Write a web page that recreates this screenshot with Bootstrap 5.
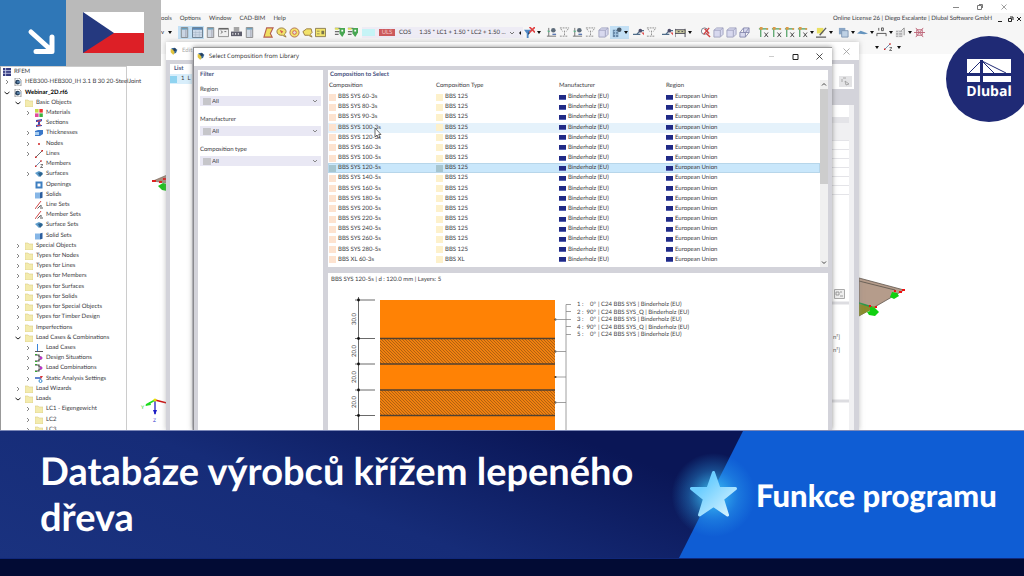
<!DOCTYPE html>
<html lang="cs">
<head>
<meta charset="utf-8">
<meta name="viewport" content="width=device-width, initial-scale=1">
<title>Databáze výrobců křížem lepeného dřeva</title>
<link href="https://cdn.jsdelivr.net/npm/bootstrap@5.3.0/dist/css/bootstrap.min.css" rel="stylesheet">
<style>
:root{--frame:#d3d3da;--ink:#3a3a3e;--navy:#1f2a75}
body{font-family:"Lato","Noto Sans",sans-serif;font-size:6px;line-height:10px;color:var(--ink);background:#fff;text-rendering:geometricPrecision}
button,select{font:inherit;color:inherit;border:0;background:none;padding:0}
svg{display:block;flex:none}
.stage{flex:1 1 0;min-height:0}
.ic{width:11px;height:11px;opacity:.85}
.ic-s{width:8px;height:8px}
/* application frame */
.app-title{height:13px;padding-right:17px;gap:18px}
.app-menu{height:12px;background:#f6f6f6;padding:0 2px 0 161px}
.app-menu nav{gap:8px}
.app-menu a{color:#444}
.app-tools{height:15px;background:#f6f6f6;padding-left:161px}
.app-tools2{height:14px;background:#f8f8f8;padding-right:122px;gap:4px}
.tool{width:13px;height:13px;display:grid;place-items:center;flex:none}
.tool.on{background:#c3e0f5}
.drop{width:6px;height:13px;display:grid;place-items:center;flex:none}
.drop::before{content:"";border:2px solid transparent;border-top:3px solid #111;border-bottom:0}
.drop.on{background:#c3e0f5}
.first-drop{width:17px;gap:3px;flex:none}
.split{width:6px;flex:none}
.split-s{width:3px;flex:none}
.loadcase{width:161px;height:11px;background:#eeecf5;gap:4px;flex:none}
.lc-color{width:13px;height:7px;background:#c6f4f6;flex:none}
.lc-tag{width:16px;height:7px;line-height:7px;background:#cc5a5c;color:#f3c7c7;flex:none}
/* navigator */
.navigator{width:127px;margin:12px 0 -5px;border-left:1px solid #999;border-top:1px solid #ccc;border-right:1px solid #ccc}
.navigator li{flex:1 1 0;min-height:0;gap:3px;white-space:nowrap}
.lv0{padding-left:2px}.lv1{padding-left:2px}.lv2{padding-left:13px}.lv3{padding-left:23px}
.chev{width:8px;height:8px;fill:none;stroke:#888}
.chev.open{stroke:#222}
/* windows */
.win{position:absolute;bottom:0;background:var(--frame)}
.win-edit{left:166px;right:165px;top:42px;box-shadow:0 0 5px #8888}
.win-lib{left:193px;right:192px;top:47px;box-shadow:0 0 5px #555a;border-left:1px solid #8a8a8e;border-top:1px solid #999}
.win-bar{height:18px;background:#fff;gap:4px;flex:none}
.win-edit .win-bar{color:#aaa;padding:0 9px 0 4px}
.win-lib .win-bar{color:#222;font:6px/10px "Open Sans",sans-serif;padding:0 9px 2px 3px}
.cap-btns{gap:17px}
.pane{background:#fff}
.pane-title{color:#47527e;font-weight:700}
.list-pane{width:22px}
.list-pane .picked{background:#d8eefb;height:10px;gap:4px}
.sw{width:7px;height:7px;flex:none}
.sw.sky{background:#8fd3f0}
.edit-side{width:22px;margin:4px 5px 0 0}
.edit-tools{height:25px;padding:2px}
.edit-grid{border-right:5px solid #f0f0f2;padding-top:4px;min-height:0}
.edit-grid div{border-bottom:1px solid #e4e4e8;height:9px}
.edit-grid .bar{background:#e4e4e8;height:5px}
.edit-grid .head{background:#f0f0f2;height:18px}
.lib-body{padding:4px 4px 0;gap:5px;min-height:0}
.filter{width:125px;padding:0 2px;flex:none}
.filter .group{margin-top:5px;margin-bottom:9px}
.filter label{display:block;margin-bottom:1px}
.pick{height:10px;background:#e9e8f4;padding:0 3px 0 3px;gap:1px}
.pick select{appearance:none;height:10px;line-height:10px;min-width:0}
.pick .sw{background:#c6c6ca;width:8px}
.comp-pane{height:197px;flex:none}
.comp-pane .pane-title{padding-left:2px}
.comp-table{table-layout:fixed;width:100%;height:185px}
.comp-table th,.comp-table td{padding:0 0 0 1px;height:10px;line-height:8px;font-weight:400;white-space:nowrap;vertical-align:middle}
.comp-table th{height:12px}
.comp-table .c1{width:107px}.comp-table .c2{width:123px}.comp-table .c3{width:107px}
.comp-table tr.hover{background:#e5f2fb}
.comp-table tr.active{background:#c9e7fb;box-shadow:inset 0 0 0 1px #b7d6ea}
.cell{gap:2px;height:8px}
.peach{background:#fde3d0}.cream{background:#fdf1cb}
.active .peach,.active .cream{background:#a6c5cf}
.eu{width:7px;height:5px;background:#202a86;flex:none;border-bottom:1px solid #5560b0}
.scroller{width:8px;background:#f0f0f0}
.scroller i{display:block;height:95px;background:#cdcdcd}
.preview{margin-top:6px;padding:2px 3px 0;min-height:0}
.section-draw{width:375px;height:150px;margin-left:-3px;font-size:6px;fill:#444}
.pointer{position:absolute;left:180px;top:79px;width:8px;height:12px}
/* canvas objects and overlays */
.model-r{position:absolute;right:117px;top:276px;width:48px;height:44px}
.model-l{position:absolute;left:151px;top:172px;width:16px;height:20px}
.axes{position:absolute;left:140px;top:395px;width:27px;height:30px;font-size:5px}
.corner{position:absolute;left:0;top:0;height:66px}
.corner-go{width:66px;background:#2f77b7}
.corner-flag{width:95px;background:#bababa}
.brand{position:absolute;right:-8px;top:36px;width:86px;height:86px;border-radius:50%;background:var(--navy);color:#fff;font:700 14px/16px "Open Sans",sans-serif;padding-top:23px}
.brand div{margin-top:2px}
/* banner */
.banner{height:128px;background:linear-gradient(20deg,#1a327f 0%,#162c78 35%,#0a1656 66%);border-top:1px solid #7c88b8;color:#fff}
.banner h1{font:700 38px/46px "Lato",sans-serif;margin:0;padding:0 30px 2px 40px}
.kind{width:345px;flex:none;gap:18px;padding:0 0 0 10px;position:relative}
.kind::before{content:"";position:absolute;inset:0;background:#0f5dd4;clip-path:polygon(64px 0,100% 0,100% 100%,0 100%)}
.kind>*{position:relative}
.kind svg{width:49px;height:49px;overflow:visible}
.kind span{font:900 31px/36px "Lato",sans-serif;white-space:nowrap}
.foot{height:18px;background:#020b34;border-top:1px solid #10287a}
</style>
</head>
<body class="vh-100 d-flex flex-column overflow-hidden">

<svg width="0" height="0" class="position-absolute" aria-hidden="true">
<symbol id="folder" viewBox="0 0 8 8"><path d="M0 1h3l1 1h4v6H0z" fill="#f3ebae" stroke="#dccf86" stroke-width=".6"/></symbol>
<symbol id="app" viewBox="0 0 8 8"><path d="M0 0h8v8H0z" fill="#343b80"/><path d="M0 2.6h8M0 5.3h8M2.6 0v8" stroke="#cfd3ee" stroke-width=".8"/></symbol>
<symbol id="file" viewBox="0 0 8 8"><path d="M1 0h4l2 2v6H1z" fill="#fff" stroke="#777" stroke-width=".7"/><circle cx="3.6" cy="4.2" r="2.4" fill="#2c4663"/><path d="M3 4h4" stroke="#7fb2df"/></symbol>
<symbol id="materials" viewBox="0 0 8 8"><rect width="3.6" height="3.6" fill="#c5d94b"/><rect x="4.4" width="3.4" height="3.6" fill="#e33"/><rect y="4.4" width="3.6" height="3.6" fill="#e04a9c"/><rect x="4.4" y="4.4" width="3.4" height="3.6" fill="#3db33d"/></symbol>
<symbol id="sections" viewBox="0 0 8 8"><path d="M1 1l6-1v2L5 3v3l2 0v1L1 8V6l2-.5V3L1 3z" fill="#3b4fb5"/><path d="M2 2.500l4-1M2 6.800l4-1" stroke="#e44"/></symbol>
<symbol id="thick" viewBox="0 0 8 8"><path d="M0 2l3-1h5v4L5 7H0z" fill="#3a78c9"/><path d="M0 3h4v3H0z" fill="#a8cdf0"/></symbol>
<symbol id="node" viewBox="0 0 8 8"><circle cx="4" cy="4" r="1" fill="#c22"/></symbol>
<symbol id="line" viewBox="0 0 8 8"><path d="M.8 7.200l6.400-6.400" stroke="#444" stroke-width=".8"/><path d="M0 6.400h1.600V8H0zM6.400 0H8v1.600H6.400z" fill="#c22"/></symbol>
<symbol id="member" viewBox="0 0 8 8"><path d="M.8 6.200L6 1" stroke="#68a" stroke-width=".9"/><path d="M0 5.600h1.400V7H0zM5.300.3h1.400v1.400H5.300z" fill="#c22"/><path d="M5.500 4.500H8L5.500 7.500H8" stroke="#444" fill="none" stroke-width=".7"/></symbol>
<symbol id="set" viewBox="0 0 8 8"><path d="M0 8l6-8" stroke="#c33" stroke-width=".9"/><path d="M2.500 7.500l3-3M6 4v2M5 7h3" fill="none" stroke="#444" stroke-width=".9"/></symbol>
<symbol id="surface" viewBox="0 0 8 8"><path d="M0 3l4-2 4 2-4 4z" fill="#5e9ccb"/><path d="M3 3l3-1 2 2-3 3z" fill="#2d648f"/></symbol>
<symbol id="opening" viewBox="0 0 8 8"><path d="M.5.500h7v7h-7z" fill="#3f7fc0"/><path d="M2.500 2.500h3v3h-3z" fill="#fff"/></symbol>
<symbol id="solid" viewBox="0 0 8 8"><path d="M0 1.500h5v6H0z" fill="#86b6e6"/><path d="M5 1.500L7.500.7v6L5 7.500z" fill="#2c5f9f"/></symbol>
<symbol id="load" viewBox="0 0 8 8"><path d="M2.500 0v7" stroke="#3a86d8"/><path d="M0 7.500h8" stroke="#444" stroke-width=".9"/></symbol>
<symbol id="combo" viewBox="0 0 8 8"><path d="M0 1h4v2h2v2H4v2H0" fill="none" stroke="#444" stroke-width="1.200"/><path d="M5 2l3 2-3 2z" fill="#b3c"/><path d="M0 0h2v1H0zM0 7h2v1H0z" fill="#3a3"/></symbol>
<symbol id="analysis" viewBox="0 0 8 8"><path d="M0 3h6" stroke="#2c58c0" stroke-width="1.500"/><path d="M5 1l3 0-2 3z" fill="#d33"/><circle cx="5.500" cy="6" r="1.500" fill="none" stroke="#38c"/></symbol>
<symbol id="panel" viewBox="0 0 12 12"><path d="M2.500.5h7v11h-7z" fill="#ccd4e0" stroke="#777"/><path d="M3 2h6" stroke="#48a" stroke-width="1.500"/><path d="M7.500 3v8" stroke="#99a"/></symbol>
<symbol id="tablei" viewBox="0 0 12 12"><path d="M.5.500h11v11H.5z" fill="#cfd8e6" stroke="#567"/><path d="M1 2h10" stroke="#47a" stroke-width="2"/><path d="M1 6h10M1 8.500h10M4 4v7M8 4v7" stroke="#9ab" stroke-width=".5"/></symbol>
<symbol id="consolei" viewBox="0 0 12 12"><path d="M.5 1.500h11v9H.5z" fill="#eee" stroke="#777"/><path d="M1 2h10" stroke="#444" stroke-width="1.500"/><path d="M3 4l2 1.500-2 1.500M7 5h2" fill="none" stroke="#555"/></symbol>
<symbol id="printer" viewBox="0 0 12 12"><path d="M3 0h6v5H3z" fill="#999"/><path d="M0 5h12v5H0z" fill="#445"/><path d="M2 6.500v2M5 6.500v2M8 6.500v2" stroke="#eee"/></symbol>
<symbol id="poly" viewBox="0 0 12 12"><path d="M4 1h7L8 7l2 4H1z" fill="#f0dc48" stroke="#a43" stroke-width="1.200"/></symbol>
<symbol id="ring" viewBox="0 0 12 12"><path d="M1 5a5 4 0 0 1 10 0 5 4 0 0 1-2 3l2 3-4-2a5 4 0 0 1-6-4z" fill="#f2df52" stroke="#876420"/><path d="M4 3l4 2-2 2z" fill="#c43"/></symbol>
<symbol id="ring2" viewBox="0 0 12 12"><circle cx="6" cy="6" r="5" fill="#f2df52" stroke="#a4553a"/><circle cx="6" cy="6" r="2" fill="#ddd" stroke="#c43"/></symbol>
<symbol id="blob" viewBox="0 0 12 12"><path d="M1 5l4-3h5l1 4-2 2 2 3-4-2H3z" fill="#f2df52" stroke="#876420"/></symbol>
<symbol id="yellow" viewBox="0 0 12 12"><path d="M.5 1.500h11v9H.5z" fill="#f3e356" stroke="#763"/><path d="M2 4h3v1H2zM2 7h3v1H2zM7 4h3v4H7z" fill="#665f30"/></symbol>
<symbol id="green" viewBox="0 0 12 12"><path d="M1 1.500h6M1 5h5M1 8h4" stroke="#555" stroke-width="1.500"/><path d="M6 1h6v5L9 11 6 7z" fill="#2a9a36"/><path d="M8 3h2v2H8z" fill="#fff"/><path d="M1 1h4v2H1z" fill="#d8d83c"/></symbol>
<symbol id="filteri" viewBox="0 0 12 12"><path d="M0 3h8L5 7v5H3V7z" fill="#3275bd"/><path d="M6 0l6 6M12 0L6 6" stroke="#d22" stroke-width="1.800"/></symbol>
<symbol id="support" viewBox="0 0 12 12"><path d="M3 1v9M1 10h10" stroke="#555"/><path d="M3 6l-2-2h4z" fill="#4a7"/><circle cx="8" cy="3.500" r="2.500" fill="#456"/><path d="M7 8h4" stroke="#46a" stroke-width="1.500"/></symbol>
<symbol id="forces" viewBox="0 0 12 12"><path d="M1 1h10M2 2l2 3M10 2L8 5M1 10h9M6 4v6" fill="none" stroke="#777" stroke-dasharray="2 1"/></symbol>
<symbol id="result" viewBox="0 0 12 12"><path d="M2 3h6v8H2z" fill="#56789a"/><path d="M3 5h5M3 8h5M5 3v8" stroke="#a5c8e5"/><circle cx="9" cy="3" r="2.500" fill="#345"/></symbol>
<symbol id="beam" viewBox="0 0 12 12"><path d="M0 8h8M4 8l4-4h4" fill="none" stroke="#357" stroke-width="1.300"/><circle cx="8" cy="4" r="2" fill="#335"/><path d="M9 6h3v3z" fill="#d33"/></symbol>
<symbol id="flag-i" viewBox="0 0 12 12"><path d="M0 3h12v4H0z" fill="#cc9"/><path d="M0 2v9M11 2v9M0 3h11M0 7h11M3 5h2M7 5h2" stroke="#223"/></symbol>
<symbol id="zoomi" viewBox="0 0 12 12"><circle cx="5" cy="4.500" r="3.500" fill="#fff" stroke="#567"/><path d="M7 7l4 4M5 2l5 5M10 1L4 8" stroke="#c22" stroke-width="1.500"/></symbol>
<symbol id="cube" viewBox="0 0 12 12"><path d="M1 3.500L4 1h7v7l-3 3H1z" fill="#d3d5ee" stroke="#9496b8"/><path d="M1 3.500h7v7M8 3.500L11 1" stroke="#9496b8" fill="none"/></symbol>
<symbol id="cubes" viewBox="0 0 12 12"><path d="M5 1h6v5H5zM1 6h6v5H1z" fill="#d3d5ee" stroke="#777aa5"/><path d="M1 6l4-5M7 11l4-5M7 6l4-5" stroke="#777aa5"/></symbol>
<symbol id="axis" viewBox="0 0 12 12"><path d="M1 2h10M3 2v9" stroke="#2f9148" stroke-width="1.300"/><path d="M2 0h3v3H2zM9 1h2v2H9z" fill="#d98b2b"/><path d="M7 6l4 5M11 6l-4 5" stroke="#222"/></symbol>
<symbol id="pencil" viewBox="0 0 12 12"><path d="M1 1h7v6H1z" fill="#e7dd45"/><path d="M0 11h11M4 9l7-8" stroke="#444" stroke-width="1.500"/></symbol>
<symbol id="layers" viewBox="0 0 12 12"><path d="M1 1h7v7H1z" fill="#7798bd"/><path d="M4 4h7v7H4z" fill="#b5cbe3" stroke="#6b87a7"/></symbol>
<symbol id="plate" viewBox="0 0 12 12"><path d="M0 7l4-3 8 3-4 1z" fill="#4c83b5"/></symbol>
<symbol id="dim" viewBox="0 0 12 12"><path d="M1 10V7h10v3M3 1v3M6 1h2v3H6z" stroke="#333" fill="none"/></symbol>
<symbol id="grayres" viewBox="0 0 12 12"><path d="M1 4h7v7H1z" fill="#a5a5a8"/><path d="M1 6h7M1 9h7M4 4v7" stroke="#ddd"/><path d="M7 4l3-3v8" fill="none" stroke="#777"/></symbol>
<symbol id="asterisk" viewBox="0 0 12 12"><path d="M2 1l8 10M10 1L2 11M0 6h12M3 3h6v6H3z" fill="none" stroke="#b34a61"/></symbol>
<symbol id="logo-i" viewBox="0 0 12 12"><path d="M2 2l5-1 4 3-2 5-4 1z" fill="#33669a"/><path d="M1 3l4 1 2 4-2 4-4-4z" fill="#e0c33e"/><circle cx="7" cy="4" r="2" fill="#2a3d57"/></symbol>
</svg>

<main class="stage position-relative overflow-hidden d-flex flex-column">
  <div class="app-title d-flex justify-content-end align-items-center">
    <svg width="6" height="6"><path d="M0 3.500h6" stroke="#888"/></svg>
    <svg width="6" height="6" fill="none" stroke="#777"><path d="M.5 1.500h4v4h-4zM2 .5h3.500V4"/></svg>
    <svg width="6" height="6" stroke="#888" stroke-width=".8"><path d="M.5.500l5 5M5.500.500l-5 5"/></svg>
  </div>
  <div class="app-menu d-flex justify-content-between align-items-center">
    <nav class="d-flex"><a href="#" class="text-decoration-none">ools</a><a href="#" class="text-decoration-none">Options</a><a href="#" class="text-decoration-none">Window</a><a href="#" class="text-decoration-none">CAD-BIM</a><a href="#" class="text-decoration-none">Help</a></nav>
    <div class="d-flex align-items-center gap-1"><span>Online License 26 | Diego Escalante | Dlubal Software GmbH</span>
      <svg width="26" height="7" fill="none" stroke="#222"><path d="M2 5.500h4M12.500 2.500h3v3h-3zM14 1h3v3M21 1l4 4M25 1l-4 4"/></svg></div>
  </div>
  <div class="app-tools d-flex align-items-center" id="tools"></div>
  <div class="app-tools2 d-flex align-items-center justify-content-end">
    <button class="drop" aria-label="Options"></button><svg class="ic-s"><use href="#member"/></svg><button class="drop" aria-label="More"></button>
  </div>
  <ul class="navigator list-unstyled d-flex flex-column flex-grow-1" id="tree"></ul>

  <svg class="model-l" viewBox="0 0 16 20"><path d="M2 9l14-6v8z" fill="#a98f7e" stroke="#6f5f55" stroke-width=".6"/><path d="M1 8h4v2H1zM8 9h3v2H8zM12 6h3v2h-3z" fill="#d22"/><path d="M7 14l5-3 4 1v7l-5-1z" fill="#1fc21f"/></svg>
  <svg class="axes" viewBox="0 0 27 30"><path d="M15 5L6 10" stroke="#1fdc1f" stroke-width="1.500"/><path d="M5 11l5-4 1 3z" fill="#1fdc1f"/><path d="M15 5l12 3" stroke="#c11" stroke-width="1.500"/><path d="M15 5v14" stroke="#1c1cc4" stroke-width="1.300"/><path d="M13 15h4l-2 5z" fill="#1c1cc4"/><circle cx="15" cy="5" r="1.600" fill="#e8e000"/><text x="1" y="14" fill="#1c1">Y</text><text x="13" y="27" fill="#33c">Z</text></svg>
  <svg class="model-r" viewBox="0 0 48 44"><path d="M0 2l45 12L0 40z" fill="#b59c8b" stroke="#5f554c" stroke-width=".8"/><path d="M0 5l36 9" stroke="#6c6157"/><path d="M0 28l18 3L0 40z" fill="#8a8c2c"/><path d="M0 27l13 4" stroke="#2a9a4a" stroke-width="1.500"/><path d="M11 31l5 1 4 4-4 4-6-1-2-3 3-1z" fill="#10d010"/><path d="M33 16l5 1 2 3-5 3-4-2z" fill="#10d010"/><path d="M43 13h3v2h-3zM40 15h3v2h-3zM35 14h2v2h-2zM10 29h2v2h-2zM16 30h2v2h-2z" fill="#e11"/></svg>

  <section class="win win-edit d-flex flex-column">
    <div class="win-bar d-flex align-items-center"><svg class="ic-s"><use href="#logo-i"/></svg><span class="flex-grow-1">Edit</span><svg width="7" height="7" stroke="#999" stroke-width=".8"><path d="M.5.500l6 6M6.500.500l-6 6"/></svg></div>
    <div class="d-flex flex-grow-1 justify-content-between">
      <div class="pane list-pane mt-1 ms-1"><div class="pane-title px-1">List</div><div class="picked d-flex align-items-center"><span class="sw sky"></span><span class="text-nowrap">1&nbsp; L</span></div></div>
      <div class="edit-side d-flex flex-column">
        <div class="pane edit-tools d-flex align-items-end justify-content-end"><svg width="13" height="11"><path d="M0 0h13v11H0z" fill="#e4e4e6"/><path d="M4 2h3M3 3v3M6 5l4 3-3 1z" fill="none" stroke="#999" stroke-width=".8"/></svg></div>
        <div class="edit-grid pane flex-grow-1 mt-3"><div></div><div class="bar"></div><div class="head"></div><div></div><div></div><div></div><div></div><div></div><div></div>
          <svg width="17" height="230"><path d="M2.500 94.500h10v9h-10z" fill="#eee" stroke="#aaa"/><path d="M4 97h3v3H4zM8 97h2M8 101h3" fill="none" stroke="#888" stroke-width=".8"/><path d="M0 108h17M0 206h17" stroke="#dddde1" stroke-width="3"/><text x="1" y="144" fill="#555">n²]</text><text x="1" y="157" fill="#555">n²]</text></svg></div>
      </div>
    </div>
  </section>

  <section class="win win-lib d-flex flex-column">
    <div class="win-bar d-flex align-items-center"><svg class="ic-s"><use href="#logo-i"/></svg><span class="flex-grow-1">Select Composition from Library</span>
      <div class="cap-btns d-flex align-items-center"><svg width="7" height="7" stroke="#ccc"><path d="M1 3.500h5"/></svg><svg width="7" height="7" fill="none" stroke="#222"><path d="M1 1.500h5v5H1z"/></svg><svg width="7" height="7" stroke="#222" stroke-width=".8"><path d="M.5.500l6 6M6.500.500l-6 6"/></svg></div></div>
    <div class="lib-body d-flex flex-grow-1">
      <div class="pane filter" id="filter"><div class="pane-title">Filter</div></div>
      <div class="flex-grow-1 d-flex flex-column">
        <div class="pane comp-pane d-flex flex-column">
          <div class="pane-title">Composition to Select</div>
          <div class="d-flex flex-grow-1">
            <table class="comp-table"><thead><tr><th class="c1">Composition</th><th class="c2">Composition Type</th><th class="c3">Manufacturer</th><th>Region</th></tr></thead><tbody id="rows"></tbody></table>
            <div class="scroller d-flex flex-column"><svg width="8" height="9" fill="none" stroke="#444"><path d="M2 5.500l2-2 2 2"/></svg><i></i><svg class="mt-auto" width="8" height="9" fill="none" stroke="#444"><path d="M2 3.500l2 2 2-2"/></svg></div>
          </div>
        </div>
        <div class="pane preview flex-grow-1">
          <div>BBS SYS 120-5s | d : 120.0 mm | Layers: 5</div>
          <svg class="section-draw" viewBox="328 285 375 150">
            <defs><pattern id="hatch" width="3" height="3" patternUnits="userSpaceOnUse"><path d="M0 0l3 3" stroke="#a05a10" stroke-width=".8"/></pattern></defs>
            <path d="M380 300h175v140H380z" fill="#ff8205"/>
            <path d="M380 338.500h175v25.500H380zM380 390h175v25.500H380z" fill="#f08010"/>
            <path d="M380 338.500h175v25.500H380zM380 390h175v25.500H380z" fill="url(#hatch)"/>
            <path d="M380 338.500h175M380 364h175M380 390h175M380 415.500h175" stroke="#514030" stroke-width="1.400"/>
            <path d="M358.500 297v140M355 300h20M355 338.500h20M355 364h20M355 390h20M355 415.500h20" stroke="#444" stroke-width=".8" fill="none"/>
            <g fill="#111"><circle cx="358.500" cy="300" r="1.400"/><circle cx="358.500" cy="338.500" r="1.400"/><circle cx="358.500" cy="364" r="1.400"/><circle cx="358.500" cy="390" r="1.400"/><circle cx="358.500" cy="415.500" r="1.400"/><circle cx="555.500" cy="319.500" r="1"/><circle cx="555.500" cy="351.500" r="1"/><circle cx="555.500" cy="377" r="1"/><circle cx="555.500" cy="402.500" r="1"/></g>
            <path d="M571 304.500h-5V437M555 319.500h16M555 351.500h11M555 377h11M555 402.500h11M566 311.500h5M566 326.500h5M566 334.500h5" fill="none" stroke="#888" stroke-width=".8"/>
            <g id="dims" text-anchor="middle"></g><g id="legend"></g>
          </svg>
        </div>
      </div>
    </div>
    <svg class="pointer" viewBox="0 0 8 12"><path d="M1 1v9l2-2 1.500 3 1.500-.7L4.700 7.500H7z" fill="#fff" stroke="#444" stroke-width=".8"/></svg>
  </section>

  <div class="corner d-flex">
    <div class="corner-go"><svg width="66" height="66" fill="none" stroke="#fff" stroke-width="5" stroke-linecap="round" stroke-linejoin="round"><path d="M31 32l20 18M52 37v14.500H36"/></svg></div>
    <div class="corner-flag"><svg width="95" height="66"><path d="M17 12h61v21H17z" fill="#fff"/><path d="M17 33h61v20H17z" fill="#dd1f26"/><path d="M17 12l31 21-31 20z" fill="#25397f"/></svg></div>
  </div>
  <div class="brand text-center">
    <svg class="mx-auto" width="44" height="23"><path d="M0 0h44v14H0zM0 17h44v6H0z" fill="#fff"/><path d="M14.500 1v22" stroke="#1f2a75" stroke-width="3"/><path d="M2 14L14 2M15 2l12 12M15 2l24 12" stroke="#1f2a75" fill="none"/></svg>
    <div>Dlubal</div>
  </div>
</main>

<footer>
  <div class="banner d-flex align-items-center justify-content-between">
    <h1>Databáze výrobců křížem lepeného dřeva</h1>
    <div class="kind d-flex align-items-center align-self-stretch">
      <svg viewBox="0 0 49 49"><defs><linearGradient id="sg" x1="0" y1="0" x2="1" y2="1"><stop offset=".3" stop-color="#6dceff"/><stop offset="1" stop-color="#e0f6ff"/></linearGradient><radialGradient id="glow"><stop offset=".2" stop-color="#3cc0f5" stop-opacity=".8"/><stop offset=".6" stop-color="#30a8f0" stop-opacity=".35"/><stop offset="1" stop-color="#2aa0f0" stop-opacity="0"/></radialGradient></defs><circle cx="24.500" cy="25" r="42" fill="url(#glow)"/><path d="M24.500 2.500l5.500 16h16.500l-13 10.500 5 16-14-9.500-14 9.500 5-16L2.500 18.500H19z" fill="url(#sg)" stroke="url(#sg)" stroke-width="3" stroke-linejoin="round"/></svg>
      <span>Funkce programu</span>
    </div>
  </div>
  <div class="foot"></div>
</footer>

<script>
const el = id => document.getElementById(id);
const icon = (n, c) => `<svg class="${c}"><use href="#${n}"/></svg>`;

// toolbar: "," small space, "|" group space, "v" drop-down arrow, "*" marks a pressed tool
const groups = "panel* tablei* panel consolei printer panel | poly ring ring2 blob yellow | green green , LC filteri v , support forces support forces cube result* v* , beam forces , beam flag-i v | zoomi cube cube cubes | axis axis axis axis v pencil v , layers v plate v dim v grayres v asterisk";
el("tools").innerHTML = '<span class="first-drop d-flex align-items-center"><span>v</span><button class="drop" aria-label="More"></button></span>' + groups.split(" ").map(t => {
  const on = t.endsWith("*") ? " on" : "", n = t.replace("*", "");
  if (n === ",") return '<span class="split-s"></span>';
  if (n === "|") return '<span class="split"></span>';
  if (n === "v") return `<button class="drop${on}" aria-label="More"></button>`;
  if (n === "LC") return '<div class="loadcase d-flex align-items-center"><span class="lc-color"></span><span class="lc-tag text-center">ULS</span><span>CO5</span><span class="ms-1 flex-grow-1 text-nowrap">1.35 * LC1 + 1.50 * LC2 + 1.50 ...</span><svg width="22" height="6" fill="#111"><path d="M0 2l2 2 2-2" fill="none" stroke="#777"/><path d="M11 1v4L9 3zM18 1v4l2-2z"/></svg></div>';
  return `<button class="tool${on}" aria-label="${n}">${icon(n, "ic")}</button>`;
}).join("");

// level, arrow (">" closed, "v" open, "" none), icon, label
const nodes = [[0,"","app","RFEM"],[1,">","file","HEB300-HEB300_IH 3.1 B 30 20-SteelJoint"],[1,"v","file","Webinar_2D.rf6"],[2,"v","folder","Basic Objects"],
[3,">","materials","Materials"],[3,"","sections","Sections"],[3,">","thick","Thicknesses"],[3,">","node","Nodes"],[3,">","line","Lines"],[3,"","member","Members"],[3,">","surface","Surfaces"],[3,"","opening","Openings"],[3,"","solid","Solids"],[3,"","set","Line Sets"],[3,"","set","Member Sets"],[3,"","surface","Surface Sets"],[3,"","solid","Solid Sets"],
...["Special Objects","Types for Nodes","Types for Lines","Types for Members","Types for Surfaces","Types for Solids","Types for Special Objects","Types for Timber Design","Imperfections"].map(t => [2,">","folder",t]),
[2,"v","folder","Load Cases & Combinations"],[3,">","load","Load Cases"],[3,">","combo","Design Situations"],[3,">","combo","Load Combinations"],[3,">","analysis","Static Analysis Settings"],[2,">","folder","Load Wizards"],[2,"v","folder","Loads"],[3,">","folder","LC1 - Eigengewicht"],[3,">","folder","LC2"],[3,">","folder","LC3"]];
el("tree").innerHTML = nodes.map(([l, a, i, t]) => `<li class="d-flex align-items-center lv${l}">` +
  (l ? `<svg class="chev${a === "v" ? " open" : ""}" viewBox="0 0 8 8"><path d="${a === ">" ? "M3 2l2 2-2 2" : a ? "M1.500 3L4 5l2.500-2" : ""}"/></svg>` : "") +
  icon(i, "ic-s") + `<span${t.startsWith("Web") ? ' class="fw-bold text-black"' : ""}>${t.replace("&", "&amp;")}</span></li>`).join("");

el("filter").innerHTML += ["Region","Manufacturer","Composition type"].map((t, i) => `<div class="group"><label for="f${i}">${t}</label><div class="pick d-flex align-items-center"><span class="sw"></span><select id="f${i}" class="flex-grow-1"><option>All</option></select><svg width="6" height="6" fill="none" stroke="#888"><path d="M1 2l2 2 2-2"/></svg></div></div>`).join("");

const comps = ["SYS 60-3s","SYS 80-3s","SYS 90-3s","SYS 100-3s","SYS 120-3s","SYS 160-3s","SYS 100-5s","SYS 120-5s","SYS 140-5s","SYS 160-5s","SYS 180-5s","SYS 200-5s","SYS 220-5s","SYS 240-5s","SYS 260-5s","SYS 280-5s","XL 60-3s"];
const cell = (c, t) => `<td><div class="cell d-flex align-items-center"><span class="${c}"></span>${t}</div></td>`;
el("rows").innerHTML = comps.map((c, i) => `<tr class="${i === 3 ? "hover" : i === 7 ? "active" : ""}">` + cell("sw peach", "BBS " + c) + cell("sw cream", c[0] === "X" ? "BBS XL" : "BBS 125") + cell("eu", "Binderholz (EU)") + cell("eu", "European Union") + "</tr>").join("");

el("dims").innerHTML = [[319,"30.0"],[351,"20.0"],[377,"20.0"],[402,"20.0"]].map(([y, t]) => `<text transform="translate(356 ${y}) rotate(-90)">${t}</text>`).join("");
el("legend").innerHTML = [1,2,3,4,5].map((n, i) => { const y = 306 + Math.round(i * 7.5), q = n % 2 === 0;
  return `<text x="577" y="${y}">${n} :</text><text x="596" y="${y}" text-anchor="end">${q ? 90 : 0}°</text><text x="598" y="${y}">| C24 BBS SYS${q ? "_Q" : ""} | Binderholz (EU)</text>`; }).join("");
</script>
<script src="https://cdn.jsdelivr.net/npm/bootstrap@5.3.0/dist/js/bootstrap.bundle.min.js"></script>
</body>
</html>
